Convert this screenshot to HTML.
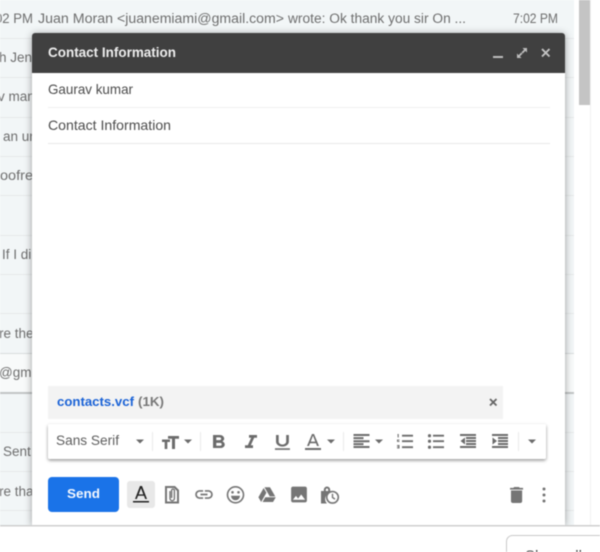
<!DOCTYPE html>
<html><head><meta charset="utf-8"><style>
html,body{margin:0;padding:0;width:600px;height:552px;overflow:hidden;background:#fff}
svg{display:block;filter:blur(.42px)}
text{font-family:"Liberation Sans",sans-serif}
</style></head><body>
<svg width="600" height="552" viewBox="0 0 600 552" xmlns="http://www.w3.org/2000/svg">
<defs>
<filter id="s" x="-5%" y="-5%" width="110%" height="110%"><feDropShadow dx="0" dy="1" stdDeviation="4" flood-color="#000" flood-opacity=".38"/></filter>
<filter id="t" x="-5%" y="-30%" width="110%" height="170%"><feDropShadow dx="0" dy="1.5" stdDeviation="1.6" flood-color="#000" flood-opacity=".42"/></filter>
</defs>
<rect width="600" height="552" fill="#fff"/>
<rect width="574" height="525" fill="#f2f6f7"/>
<rect y="353" width="574" height="40" fill="#f8fafa"/>
<g fill="#e6e9ea">
<rect y="38" width="574" height="1"/><rect y="77" width="574" height="1"/><rect y="117" width="574" height="1"/><rect y="156" width="574" height="1"/><rect y="195" width="574" height="1"/><rect y="235" width="574" height="1"/><rect y="274" width="574" height="1"/><rect y="313" width="574" height="1"/><rect y="353" width="574" height="1" fill="#d9dcdd"/><rect y="392" width="574" height="2" fill="#c2c5c6"/><rect y="432" width="574" height="1"/><rect y="471" width="574" height="1"/><rect y="510" width="574" height="1"/>
</g>
<rect x="579" width="11" height="105" fill="#c4c4c4"/>
<rect x="590" width="1" height="525" fill="#f1f1f1"/>
<g fill="#6e6e6e" font-size="13.5">
<text x="-5" y="23" textLength="38" lengthAdjust="spacingAndGlyphs">02 PM</text>
<text x="38" y="23" textLength="75" lengthAdjust="spacingAndGlyphs">Juan Moran</text>
<text x="117" y="23" textLength="167" lengthAdjust="spacingAndGlyphs">&lt;juanemiami@gmail.com&gt;</text>
<text x="288" y="23" textLength="178" lengthAdjust="spacingAndGlyphs">wrote: Ok thank you sir On ...</text>
<text x="513" y="23" textLength="45" lengthAdjust="spacingAndGlyphs">7:02 PM</text>
<text x="-1" y="62">h Jen</text>
<text x="-2" y="101">v man</text>
<text x="3" y="141">an ur</text>
<text x="0" y="180" textLength="33" lengthAdjust="spacingAndGlyphs">oofre</text>
<text x="2" y="259">If I di</text>
<text x="-1" y="338">re the</text>
<text x="-1" y="377">@gma</text>
<text x="3" y="456">Sent</text>
<text x="-1" y="496">re tha</text>
</g>

<path d="M32 525V36a3 3 0 0 1 3-3h527a3 3 0 0 1 3 3v489z" fill="#fff" filter="url(#s)"/>
<path d="M32 73V36a3 3 0 0 1 3-3h527a3 3 0 0 1 3 3v37z" fill="#404040"/>
<text x="48" y="57" font-size="13.5" font-weight="700" fill="#eee" textLength="128" lengthAdjust="spacingAndGlyphs">Contact Information</text>
<rect x="493" y="56" width="10" height="2" fill="#bdbdbd"/>
<path d="M517 58v-4.5l1.6 1.6 2.6-2.6 1.3 1.3-2.6 2.6 1.6 1.6zM527 48v4.5l-1.6-1.6-2.6 2.6-1.3-1.3 2.6-2.6-1.6-1.6z" fill="#bdbdbd"/>
<path d="M542 49l7.5 7.5M549.500 49l-7.500 7.500" stroke="#c4c4c4" stroke-width="1.900" fill="none"/>

<text x="48" y="94" font-size="14" fill="#4c4c4c" textLength="85" lengthAdjust="spacingAndGlyphs">Gaurav kumar</text>
<rect x="48" y="107" width="502" height="1" fill="#efefef"/>
<text x="48" y="130" font-size="14" fill="#4c4c4c" textLength="123" lengthAdjust="spacingAndGlyphs">Contact Information</text>
<rect x="48" y="143" width="502" height="1" fill="#e8e8e8"/>

<rect x="48" y="386" width="455" height="33" fill="#f3f3f3"/>
<text x="57" y="406" font-size="13" font-weight="700" fill="#1a62d6" textLength="77" lengthAdjust="spacingAndGlyphs">contacts.vcf</text>
<text x="138" y="406" font-size="13" font-weight="700" fill="#777" textLength="26" lengthAdjust="spacingAndGlyphs">(1K)</text>
<path d="M490 399l6.500 6.500M496.500 399l-6.500 6.500" stroke="#666" stroke-width="1.800" fill="none"/>

<rect x="48" y="424" width="498" height="35" rx="2" fill="#fff" filter="url(#t)"/>
<text x="56" y="445" font-size="13.500" fill="#5e5e5e" textLength="63" lengthAdjust="spacingAndGlyphs">Sans Serif</text>
<g fill="#eaeaea"><rect x="152" y="432" width="1" height="19"/><rect x="200" y="432" width="1" height="19"/><rect x="343" y="432" width="1" height="19"/><rect x="518" y="432" width="1" height="19"/></g>
<g fill="#6c6c6c">
<path d="M136 439.500h8l-4 4zM184 439.500h8l-4 4zM327 439.500h8l-4 4zM375 439.500h8l-4 4zM528 439.500h8l-4 4z"/>
<path d="M162 439.500h8v2.500h-2.700v7h-2.600v-7H162zM168 436h11v2.800h-4v10.200h-3v-10.200h-4z"/>
<path transform="translate(205.400 431.300) scale(1.090 .93)" d="M15.6 10.790c.97-.67 1.650-1.770 1.650-2.790 0-2.260-1.750-4-4-4H7v14h7.040c2.090 0 3.710-1.700 3.710-3.790 0-1.520-.86-2.820-2.150-3.420zM10 6.500h3c.83 0 1.500.67 1.500 1.500s-.67 1.500-1.500 1.500h-3v-3zm3.500 9H10v-3h3.500c.83 0 1.500.67 1.500 1.500s-.67 1.500-1.500 1.500z"/>
<path transform="translate(239 431.300) scale(1 .93)" d="M10 4v3h2.210l-3.420 8H6v3h8v-3h-2.210l3.420-8H18V4z"/>
<path transform="translate(269.600 432.500) scale(1.070 .83)" d="M12 17c3.310 0 6-2.690 6-6V3h-2.500v8c0 1.930-1.570 3.500-3.500 3.500S8.500 12.930 8.500 11V3H6v8c0 3.310 2.690 6 6 6zm-7 2v2h14v-2H5z"/>
<path d="M305 448h16v2h-16zM312 434h2l5 12h-2l-1-2.800h-6l-1 2.800h-2zm-1.300 7.600h4.600l-2.300-6z"/>
<path d="M353.500 434h16v2h-16zM353.500 437.100h10v2h-10zM353.500 440.200h16v2h-16zM353.500 443.100h10v2h-10zM353.500 446h16v2h-16z"/>
<path d="M402 434.800h11v1.800h-11zM402 440.300h11v1.800h-11zM402 446.300h11v1.800h-11z"/>
<path d="M397.500 434h1.200v3.500h-1zM397 439.500h2.500v.8h-1.500v.6h1.500v1h-2.500zM397 445h2.500v3.500H397v-.8h1.500v-.5H397v-.8h1.500v-.5H397z"/>
<path d="M433 434.800h11v1.800h-11zM433 440.300h11v1.800h-11zM433 446.300h11v1.800h-11z"/>
<circle cx="429.500" cy="435.700" r="1.600"/><circle cx="429.500" cy="441.200" r="1.600"/><circle cx="429.500" cy="447.200" r="1.600"/>
<path d="M460 434h16v2h-16zM466 437h10v2h-10zM466 440h10v2h-10zM466 443h10v2h-10zM460 446h16v2h-16zM465 437.500v7l-4.500-3.500z"/>
<path d="M492 434h16v2h-16zM498 437h10v2h-10zM498 440h10v2h-10zM498 443h10v2h-10zM492 446h16v2h-16zM492.500 437.500v7l4.500-3.500z"/>
</g>

<rect x="48" y="477" width="71" height="35" rx="4" fill="#1a73e8"/>
<text x="67" y="498" font-size="13" font-weight="700" fill="#f4f8fe" textLength="33" lengthAdjust="spacingAndGlyphs">Send</text>
<rect x="127" y="481" width="28" height="27" rx="3" fill="#e8e8e8"/>
<path d="M133 501h16v1.500h-16zM140 486h2l5 13h-1.800l-1.200-3.200h-6l-1.200 3.200H135zm-1.300 8.400h4.600l-2.300-6.200z" fill="#222"/>
<g fill="#757575">
<path d="M165 486h10l4 4v13.500h-14zm2 2v13.500h10v-10.500l-3-3z" fill-rule="evenodd"/>
<path d="M170 491v7.500a2.200 2.200 0 0 0 4.400 0V490.500a1.400 1.400 0 0 0-2.800 0V498" fill="none" stroke="#757575" stroke-width="1.400"/>
<path transform="translate(193.500 484) scale(.875)" d="M3.900 12c0-1.710 1.390-3.100 3.100-3.100h4V7H7c-2.760 0-5 2.240-5 5s2.240 5 5 5h4v-1.900H7c-1.710 0-3.100-1.390-3.100-3.100zM8 13h8v-2H8v2zm9-6h-4v1.900h4c1.710 0 3.100 1.390 3.100 3.100s-1.390 3.100-3.100 3.100h-4V17h4c2.760 0 5-2.240 5-5s-2.240-5-5-5z"/>
<circle cx="235.500" cy="494.800" r="8" fill="none" stroke="#757575" stroke-width="1.600"/>
<circle cx="232.500" cy="492.300" r="1.300"/><circle cx="238.500" cy="492.300" r="1.300"/>
<path d="M231 495.800h9a4.500 4.500 0 0 1-9 0z"/>
<path transform="translate(257.500 485.200) scale(.8)" d="M7.710 3.500 1.150 15l3.430 6 6.550-11.500L7.710 3.500zM9.730 15 6.300 21h13.120l3.430-6H9.730zm12.410-1L15.580 2.500H8.730L15.290 14h6.850z"/>
<path transform="translate(288.500 484) scale(.875)" d="M21 19V5c0-1.100-.9-2-2-2H5c-1.100 0-2 .9-2 2v14c0 1.100.9 2 2 2h14c1.100 0 2-.9 2-2zM8.500 13.500l2.500 3.010L14.500 12l4.500 6H5l3.500-4.500z"/>
<path d="M321 491h2.800v-1.300a3.200 3.200 0 0 1 6.400 0V491h1.800v1.500a6.500 6.500 0 0 0-5 11h-6zm4.800 0h2.400v-1.300a1.200 1.200 0 0 0-2.400 0z" fill-rule="evenodd"/>
<circle cx="332.500" cy="497.300" r="5.800" fill="none" stroke="#757575" stroke-width="1.600"/>
<path d="M332.500 493.800v3.700l2.500 1.600" fill="none" stroke="#757575" stroke-width="1.400"/>
<path transform="translate(505.400 484.300) scale(.93 .89)" d="M6 19c0 1.100.9 2 2 2h8c1.100 0 2-.9 2-2V7H6v12zM19 4h-3.500l-1-1h-5l-1 1H5v2h14V4z"/>
<circle cx="544" cy="489" r="1.500"/><circle cx="544" cy="495" r="1.500"/><circle cx="544" cy="501" r="1.500"/>
</g>

<rect y="525" width="600" height="27" fill="#fff"/>
<rect y="525" width="600" height="1.500" fill="#cfcfcf"/>
<rect x="506.500" y="535.500" width="110" height="34" rx="6" fill="#fff" stroke="#c9c9c9"/>
<text x="525" y="560" font-size="14" fill="#444" textLength="57" lengthAdjust="spacingAndGlyphs">Show all</text>
</svg>
</body></html>
